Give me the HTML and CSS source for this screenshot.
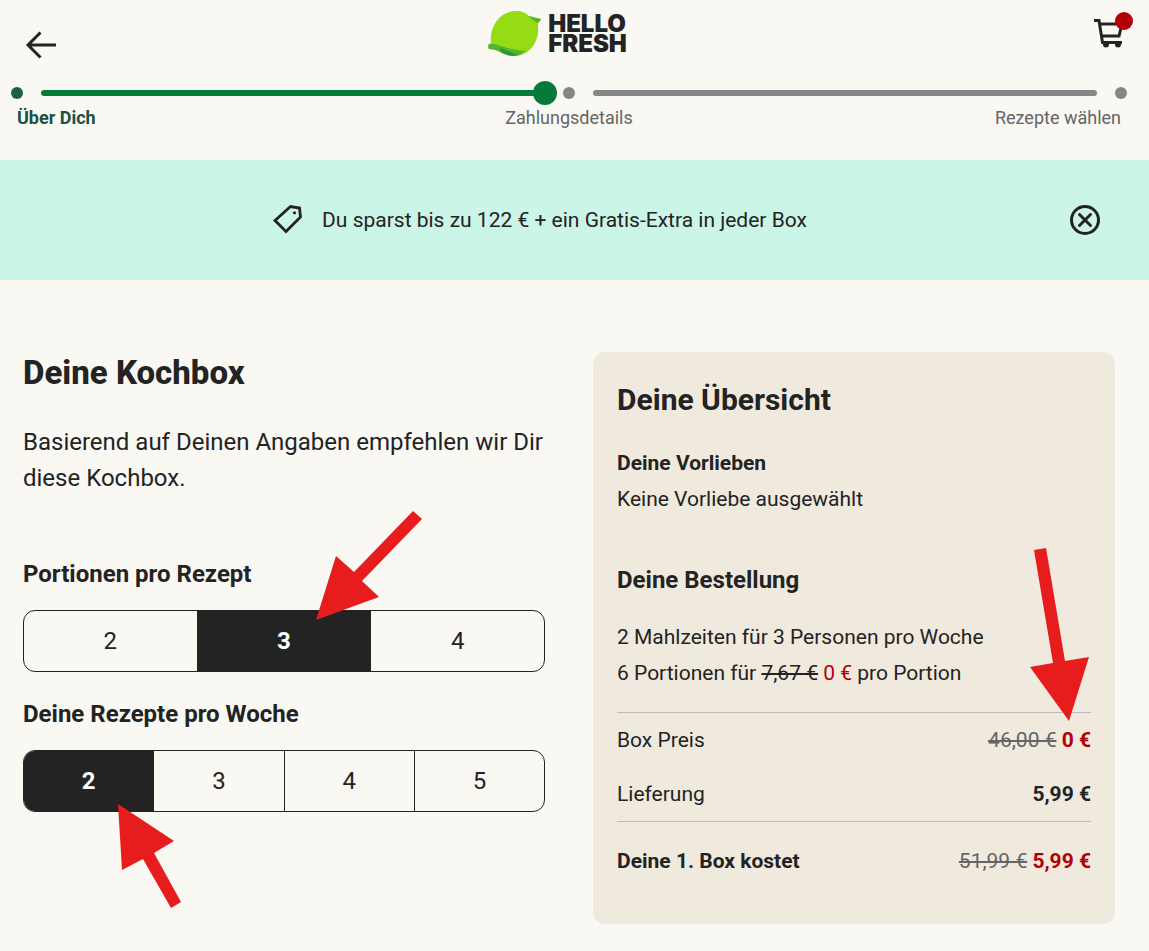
FILE: index.html
```html
<!DOCTYPE html>
<html lang="de">
<head>
<meta charset="utf-8">
<meta name="viewport" content="width=device-width, initial-scale=1">
<title>Deine Kochbox</title>
<link rel="stylesheet" href="styles.css">
</head>
<body>
<header class="header">
  <button class="icon-button" type="button" aria-label="Zurück">
    <svg class="icon" viewBox="0 0 36 36" aria-hidden="true"><path d="M33 18H5M17.500 5.500L5 18l12.500 12.500" fill="none" stroke="#232323" stroke-width="3"/></svg>
  </button>
  <a class="logo" href="#" aria-label="HelloFresh">
    <svg class="logo-lime" viewBox="0 0 54 47" aria-hidden="true">
      <path d="M3 34C1 16 12 1 28 1c6 0 10 2 13 5l12 3c-1 3-3 3-3 5 2 20-10 32-24 32-12 0-15-7-25-7-2-3 0-6 2-5z" fill="#96dc14"/>
      <path d="M40 6c4 1 8 2 13 3-1 2-2 3-3 4-4-2-7-4-10-7z" fill="#56b52f"/>
      <path d="M1 34c9-2 15 6 37 7-4 3-8 5-12 5-12 0-15-7-25-7-1-2-1-4 0-5z" fill="#56b52f"/>
      <path d="M11 38c6 1 12 5 19 7-8 2-14-1-17-4z" fill="#2b963b"/>
    </svg>
    <span class="logo-name">HELLO<br>FRESH</span>
  </a>
  <button class="icon-button cart" type="button" aria-label="Warenkorb">
    <svg class="icon" viewBox="0 0 36 36" aria-hidden="true">
      <path d="M3 5.500h5l3.500 22H31M9 9h22l-3 12H11" fill="none" stroke="#232323" stroke-width="3"/>
      <circle cx="15" cy="29.500" r="3" fill="#232323"/><circle cx="27" cy="29.500" r="3" fill="#232323"/>
    </svg>
    <span class="cart-badge"></span>
  </button>
</header>

<nav class="steps" aria-label="Fortschritt">
  <div class="track">
    <span class="dot dot-done"></span>
    <span class="bar bar-done"><span class="knob"></span></span>
    <span class="dot"></span>
    <span class="bar"></span>
    <span class="dot"></span>
  </div>
  <div class="step-names">
    <span class="step-current">Über Dich</span>
    <span>Zahlungsdetails</span>
    <span class="step-last">Rezepte wählen</span>
  </div>
</nav>

<section class="banner">
  <p class="banner-text">
    <svg class="icon" viewBox="0 0 36 36" aria-hidden="true"><path d="M5 18.500L20.500 4.500l9 1.500 1 9L16 29.500z" fill="none" stroke="#232323" stroke-width="2.800"/><circle cx="24.500" cy="10.800" r="1.600" fill="#232323"/></svg>
    Du sparst bis zu 122 € + ein Gratis-Extra in jeder Box
  </p>
  <button class="icon-button" type="button" aria-label="Schließen">
    <svg class="icon" viewBox="0 0 36 36" aria-hidden="true"><circle cx="18" cy="18" r="13.500" fill="none" stroke="#232323" stroke-width="3"/><path d="M12.500 12.500l11 11M23.500 12.500l-11 11" stroke="#232323" stroke-width="3" stroke-linecap="round"/></svg>
  </button>
</section>

<main class="content">
  <form class="box-form">
    <h1 class="title">Deine Kochbox</h1>
    <p class="intro">Basierend auf Deinen Angaben empfehlen wir Dir diese Kochbox.</p>
    <fieldset class="choice">
      <legend class="choice-label">Portionen pro Rezept</legend>
      <div class="segments">
        <label class="segment"><input type="radio" name="portions" value="2"><span>2</span></label>
        <label class="segment"><input type="radio" name="portions" value="3" checked><span>3</span></label>
        <label class="segment"><input type="radio" name="portions" value="4"><span>4</span></label>
      </div>
      <svg class="arrow arrow-portions" viewBox="0 0 106 110" aria-hidden="true"><path d="M97 0l9 8-60 62 17 16L0 109 20 45l18 16z" fill="#e71c1c"/></svg>
    </fieldset>
    <fieldset class="choice">
      <legend class="choice-label">Deine Rezepte pro Woche</legend>
      <div class="segments">
        <label class="segment"><input type="radio" name="recipes" value="2" checked><span>2</span></label>
        <label class="segment"><input type="radio" name="recipes" value="3"><span>3</span></label>
        <label class="segment"><input type="radio" name="recipes" value="4"><span>4</span></label>
        <label class="segment"><input type="radio" name="recipes" value="5"><span>5</span></label>
      </div>
      <svg class="arrow arrow-recipes" viewBox="0 0 64 104" aria-hidden="true"><path d="M0 0l56 37-20 12 27 49-10 6-28-49-21 11z" fill="#e71c1c"/></svg>
    </fieldset>
  </form>

  <aside class="summary">
    <h2 class="summary-title">Deine Übersicht</h2>
    <h3 class="summary-label">Deine Vorlieben</h3>
    <p class="line">Keine Vorliebe ausgewählt</p>
    <h3 class="order-label">Deine Bestellung</h3>
    <p class="line">2 Mahlzeiten für 3 Personen pro Woche</p>
    <p class="line">6 Portionen für <s>7,67 €</s> <span class="deal">0 €</span> pro Portion</p>
    <dl class="costs">
      <div class="cost"><dt>Box Preis</dt><dd><s class="old">46,00 €</s> <strong class="deal">0 €</strong></dd></div>
      <div class="cost"><dt>Lieferung</dt><dd><strong>5,99 €</strong></dd></div>
    </dl>
    <dl class="total">
      <div class="cost"><dt><strong>Deine 1. Box kostet</strong></dt><dd><s class="old">51,99 €</s> <strong class="deal">5,99 €</strong></dd></div>
    </dl>
    <svg class="arrow arrow-price" viewBox="0 0 60 173" aria-hidden="true"><path d="M4 2l12-2 19 113 24-4-20 64L0 119l23-4z" fill="#e71c1c"/></svg>
  </aside>
</main>
</body>
</html>
```
FILE: styles.css
```css
*, *::before, *::after { box-sizing: border-box; }

body {
  margin: 0;
  background: #f9f8f3;
  color: #232323;
  font-family: Roboto, "Liberation Sans", sans-serif;
  font-size: 21px;
  line-height: 36px;
}

h1, h2, h3, p, dl, dd { margin: 0; }

strong { font-weight: 700; }

.icon {
  display: block;
  flex: none;
  width: 36px;
  height: 36px;
}

.icon-button {
  display: block;
  padding: 0;
  border: 0;
  background: none;
  cursor: pointer;
}

.header {
  display: grid;
  grid-template-columns: auto 1fr auto;
  align-items: center;
  padding: 10px 22px 0 23px;
}

.header > .icon-button { padding-top: 17px; }

.logo {
  display: flex;
  justify-content: center;
  align-items: center;
  align-self: start;
  gap: 6px;
  color: #232323;
  text-decoration: none;
}

.logo-lime {
  width: 54px;
  height: 47px;
}

.logo-name {
  padding-top: 1px;
  font-family: Inter, sans-serif;
  font-size: 24px;
  font-weight: 900;
  line-height: 20px;
}

.header > .cart {
  position: relative;
  align-self: start;
  padding: 5px 0 0 35px;
}

.cart-badge {
  position: absolute;
  top: 2px;
  right: -6px;
  width: 18px;
  height: 18px;
  border-radius: 50%;
  background: #b30006;
}

.steps { padding: 18px 0 30px; }

.track {
  display: flex;
  align-items: center;
  gap: 18px;
  height: 24px;
  padding: 0 22px 0 11px;
}

.dot {
  width: 12px;
  height: 12px;
  border-radius: 50%;
  background: #868686;
}

.dot-done { background: #1c6142; }

.bar {
  position: relative;
  flex: 1;
  height: 6px;
  border-radius: 3px;
  background: #868686;
}

.bar-done { background: #067a39; }

.knob {
  position: absolute;
  top: -9px;
  right: -12px;
  width: 24px;
  height: 24px;
  border-radius: 50%;
  background: #067a39;
}

.step-names {
  display: grid;
  grid-template-columns: 1fr auto 1fr;
  padding: 0 28px 0 17px;
  color: #656565;
  font-size: 18px;
  line-height: 25px;
}

.step-current {
  color: #1c5040;
  font-weight: 700;
}

.step-last { text-align: right; }

.banner {
  display: flex;
  align-items: center;
  min-height: 120px;
  padding: 0 46px 0 10px;
  background: #cbf5e6;
}

.banner-text {
  display: flex;
  flex: 1;
  justify-content: center;
  align-items: center;
  gap: 16px;
}

.content {
  display: grid;
  grid-template-columns: 1fr 1fr;
  align-items: start;
  gap: 48px;
  padding: 72px 34px 24px 23px;
}

.title {
  font-size: 33px;
  font-weight: 800;
  line-height: 42px;
}

.intro {
  margin: 30px 0 60px;
  font-size: 24px;
}

.choice {
  position: relative;
  min-width: 0;
  margin: 0 0 24px;
  padding: 0;
  border: 0;
}

.choice-label {
  margin-bottom: 18px;
  padding: 0;
  font-size: 24px;
  font-weight: 700;
}

.segments {
  display: flex;
  overflow: hidden;
  border: 1px solid #232323;
  border-radius: 12px;
}

.segment {
  position: relative;
  flex: 1;
  font-size: 24px;
  text-align: center;
  cursor: pointer;
}

.segment + .segment { border-left: 1px solid #232323; }

.segment input {
  position: absolute;
  inset: 0;
  margin: 0;
  opacity: 0;
}

.segment span {
  display: block;
  line-height: 60px;
}

.segment input:checked + span {
  background: #232323;
  color: #fff;
  font-weight: 700;
}

.summary {
  position: relative;
  padding: 24px 24px 45px;
  border-radius: 12px;
  background: #f0e9de;
}

.summary-title {
  margin-bottom: 21px;
  font-size: 30px;
  font-weight: 700;
  line-height: 48px;
}

.summary-label {
  font-size: 21px;
  font-weight: 700;
}

.order-label {
  margin: 45px 0 21px;
  font-size: 24px;
  font-weight: 700;
}

.costs {
  display: grid;
  gap: 18px;
  margin: 21px 0;
  padding: 9px 0;
  border-top: 1px solid #bbb;
  border-bottom: 1px solid #bbb;
}

.cost {
  display: flex;
  justify-content: space-between;
}

.old { color: #656565; }

.deal { color: #b30006; }

.arrow {
  position: absolute;
  pointer-events: none;
}

.arrow-portions {
  top: -99px;
  left: 293px;
  width: 106px;
  height: 110px;
}

.arrow-recipes {
  top: 54px;
  left: 95px;
  width: 64px;
  height: 104px;
}

.arrow-price {
  top: 196px;
  right: 25px;
  width: 60px;
  height: 173px;
}
```
